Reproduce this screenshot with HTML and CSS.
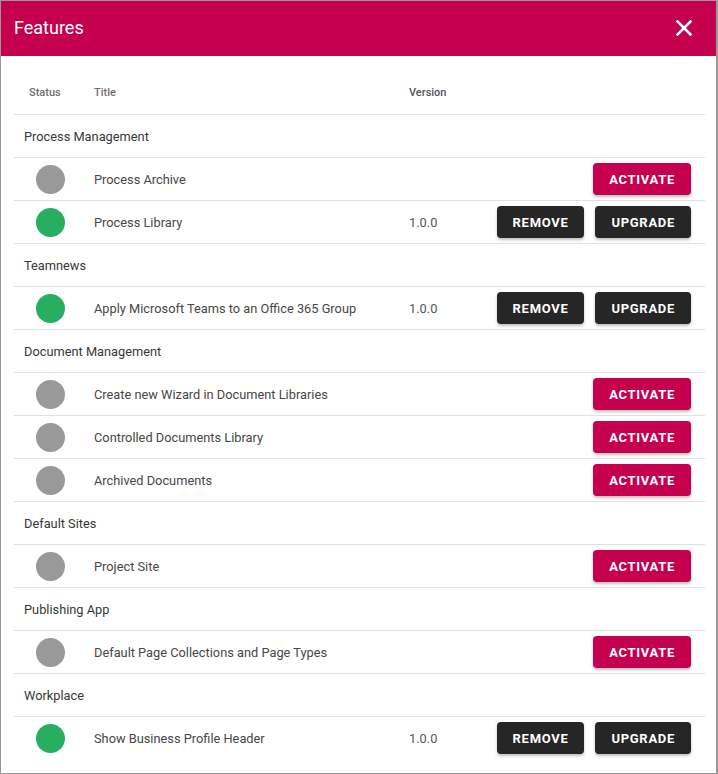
FILE: index.html
```html
<!DOCTYPE html>
<html>
<head>
<meta charset="utf-8">
<link rel="stylesheet" href="styles.css">
</head>
<body>
<div class="dialog">
  <div class="dialog-header">
    <span class="dialog-title">Features</span>
    <svg class="close" width="16" height="16" viewBox="0 0 16 16"><path d="M1.5 1.5 L14.5 14.5 M14.5 1.5 L1.5 14.5" stroke="#fff" stroke-width="2.6" stroke-linecap="square"/></svg>
  </div>
  <div class="content">
    <div class="row head">
      <div class="c-status">Status</div>
      <div class="c-title">Title</div>
      <div class="c-version">Version</div>
      <div class="c-actions"></div>
    </div>

    <div class="group">Process Management</div>
    <div class="row">
      <div class="c-status"><span class="dot off"></span></div>
      <div class="c-title">Process Archive</div>
      <div class="c-version"></div>
      <div class="c-actions"><button class="btn primary">Activate</button></div>
    </div>
    <div class="row">
      <div class="c-status"><span class="dot on"></span></div>
      <div class="c-title">Process Library</div>
      <div class="c-version">1.0.0</div>
      <div class="c-actions"><button class="btn dark">Remove</button><button class="btn dark">Upgrade</button></div>
    </div>

    <div class="group">Teamnews</div>
    <div class="row">
      <div class="c-status"><span class="dot on"></span></div>
      <div class="c-title">Apply Microsoft Teams to an Office 365 Group</div>
      <div class="c-version">1.0.0</div>
      <div class="c-actions"><button class="btn dark">Remove</button><button class="btn dark">Upgrade</button></div>
    </div>

    <div class="group">Document Management</div>
    <div class="row">
      <div class="c-status"><span class="dot off"></span></div>
      <div class="c-title">Create new Wizard in Document Libraries</div>
      <div class="c-version"></div>
      <div class="c-actions"><button class="btn primary">Activate</button></div>
    </div>
    <div class="row">
      <div class="c-status"><span class="dot off"></span></div>
      <div class="c-title">Controlled Documents Library</div>
      <div class="c-version"></div>
      <div class="c-actions"><button class="btn primary">Activate</button></div>
    </div>
    <div class="row">
      <div class="c-status"><span class="dot off"></span></div>
      <div class="c-title">Archived Documents</div>
      <div class="c-version"></div>
      <div class="c-actions"><button class="btn primary">Activate</button></div>
    </div>

    <div class="group">Default Sites</div>
    <div class="row">
      <div class="c-status"><span class="dot off"></span></div>
      <div class="c-title">Project Site</div>
      <div class="c-version"></div>
      <div class="c-actions"><button class="btn primary">Activate</button></div>
    </div>

    <div class="group">Publishing App</div>
    <div class="row">
      <div class="c-status"><span class="dot off"></span></div>
      <div class="c-title">Default Page Collections and Page Types</div>
      <div class="c-version"></div>
      <div class="c-actions"><button class="btn primary">Activate</button></div>
    </div>

    <div class="group">Workplace</div>
    <div class="row last">
      <div class="c-status"><span class="dot on"></span></div>
      <div class="c-title">Show Business Profile Header</div>
      <div class="c-version">1.0.0</div>
      <div class="c-actions"><button class="btn dark">Remove</button><button class="btn dark">Upgrade</button></div>
    </div>
  </div>
</div>
</body>
</html>
```
FILE: styles.css
```css
html, body {
  margin: 0;
  padding: 0;
  background: #fff;
}
body {
  font-family: Roboto, "Liberation Sans", sans-serif;
}
.dialog {
  box-sizing: border-box;
  width: 718px;
  height: 774px;
  border: 1px solid #9a9a9a;
  border-right-width: 2px;
  display: flex;
  flex-direction: column;
  overflow: hidden;
}
.dialog-header {
  height: 55px;
  background: #c5004f;
  display: flex;
  align-items: center;
  justify-content: space-between;
  padding: 0 24px 0 13px;
  flex-shrink: 0;
}
.dialog-title {
  color: #fff;
  font-size: 18px;
  padding-bottom: 2px;
}
.close {
  display: block;
  margin-top: -1px;
}
.content {
  padding: 15px 11px 0 13px;
}
.row {
  display: grid;
  grid-template-columns: 80px 315px 1fr auto;
  align-items: center;
  height: 42px;
  border-bottom: 1px solid #e0e0e0;
  font-size: 12.8px;
  color: #474747;
}
.row.head {
  height: 43px;
  font-size: 11px;
  color: #6f6f6f;
  font-weight: 500;
}
.row.head .c-status {
  padding-left: 15px;
  justify-content: flex-start;
}
.row.last {
  border-bottom: none;
}
.c-status {
  display: flex;
  justify-content: center;
  padding-right: 8px;
}
.c-version {
  color: #555;
}
.group {
  height: 42px;
  border-bottom: 1px solid #e0e0e0;
  display: flex;
  align-items: center;
  padding-left: 10px;
  font-size: 12.8px;
  color: #383838;
}
.dot {
  display: block;
  width: 29px;
  height: 29px;
  border-radius: 50%;
}
.dot.off { background: #999999; }
.dot.on { background: #27ae60; }
.c-actions {
  display: flex;
  justify-content: flex-end;
  gap: 11px;
  padding-right: 14px;
}
.btn {
  font-family: Roboto, "Liberation Sans", sans-serif;
  font-weight: 700;
  font-size: 13px;
  letter-spacing: 0.7px;
  text-transform: uppercase;
  color: #fff;
  border: none;
  border-radius: 4px;
  height: 32px;
  padding: 0 16px;
  box-shadow: 0 2px 3px rgba(0,0,0,0.25);
  cursor: pointer;
}
.btn.primary { background: #c5004f; }
.btn.dark { background: #262626; }
```
